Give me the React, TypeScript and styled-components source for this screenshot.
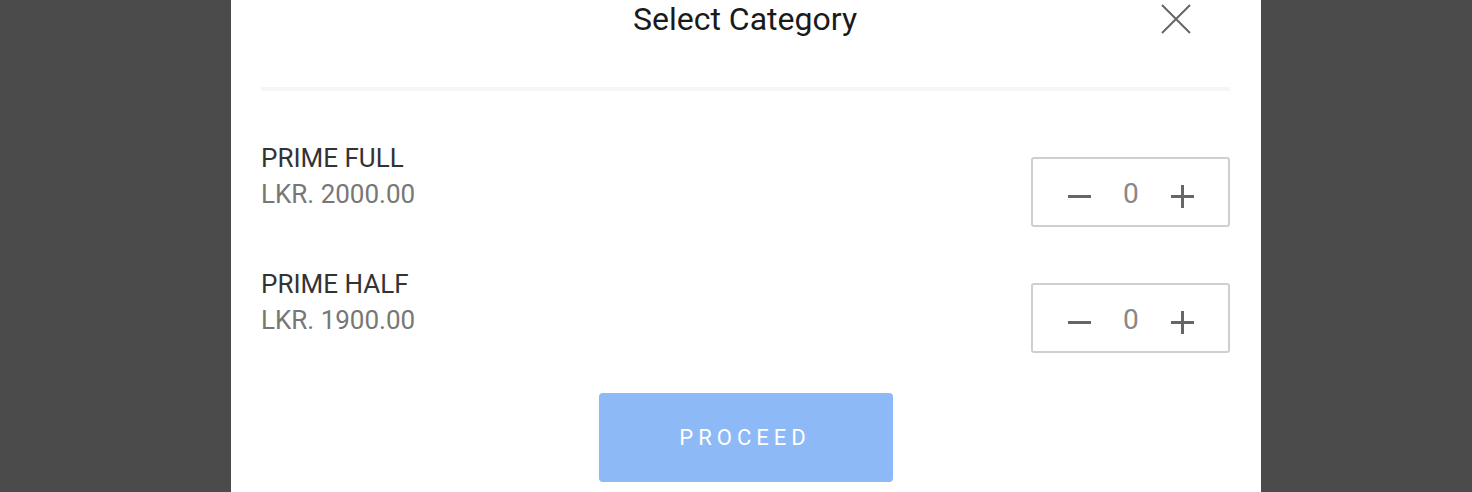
import React, { useState } from "react";
import styled, { createGlobalStyle } from "styled-components";

const GlobalStyle = createGlobalStyle`
  html, body {
    margin: 0;
    padding: 0;
    background: #4b4b4b;
    font-family: Roboto, "Liberation Sans", sans-serif;
  }
`;

type Category = { name: string; price: string };

const categories: Category[] = [
  { name: "PRIME FULL", price: "LKR. 2000.00" },
  { name: "PRIME HALF", price: "LKR. 1900.00" },
];

const App = () => {
  const [counts, setCounts] = useState<number[]>(categories.map(() => 0));

  const change = (i: number, d: number) =>
    setCounts((c) => c.map((v, j) => (j === i ? Math.max(0, v + d) : v)));

  return (
    <Page>
      <GlobalStyle />
      <Modal>
        <Header>
          <Title>Select Category</Title>
          <CloseButton aria-label="close">
            <svg width="30" height="30" viewBox="0 0 30 30">
              <path
                d="M1 1 L29 29 M29 1 L1 29"
                stroke="#666"
                strokeWidth="2"
                fill="none"
              />
            </svg>
          </CloseButton>
        </Header>
        <Divider />
        <List>
          {categories.map((c, i) => (
            <Row key={c.name}>
              <Info>
                <Name>{c.name}</Name>
                <Price>{c.price}</Price>
              </Info>
              <Stepper>
                <StepButton onClick={() => change(i, -1)}>
                  <svg width="23" height="23" viewBox="0 0 23 23">
                    <path d="M0 11.5 H23" stroke="#666" strokeWidth="3" />
                  </svg>
                </StepButton>
                <Count>{counts[i]}</Count>
                <StepButton onClick={() => change(i, 1)}>
                  <svg width="23" height="23" viewBox="0 0 23 23">
                    <path
                      d="M0 11.5 H23 M11.5 0 V23"
                      stroke="#666"
                      strokeWidth="3"
                    />
                  </svg>
                </StepButton>
              </Stepper>
            </Row>
          ))}
        </List>
        <Footer>
          <ProceedButton disabled={counts.every((v) => v === 0)}>
            PROCEED
          </ProceedButton>
        </Footer>
      </Modal>
    </Page>
  );
};

const Page = styled.div`
  width: 100%;
  height: 492px;
  display: flex;
  justify-content: flex-start;
  padding-left: 231px;
  box-sizing: border-box;
  overflow: hidden;
`;

const Modal = styled.div`
  width: 1030px;
  height: 492px;
  background: #fff;
  box-sizing: border-box;
  padding: 0 31px 0 30px;
  display: flex;
  flex-direction: column;
`;

const Header = styled.div`
  position: relative;
  height: 38px;
  display: flex;
  justify-content: center;
  align-items: center;
  margin-bottom: 49px;
`;

const Title = styled.h2`
  margin: 0;
  font-size: 32px;
  font-weight: 400;
  color: #1a1a1a;
  line-height: 38px;
  margin-left: -1px;
`;

const CloseButton = styled.button`
  position: absolute;
  right: 39px;
  top: 4px;
  background: none;
  border: none;
  padding: 0;
  cursor: pointer;
  display: flex;
`;

const Divider = styled.div`
  height: 4px;
  background: #f6f6f6;
`;

const List = styled.div`
  display: flex;
  flex-direction: column;
  gap: 56px;
  margin-top: 66px;
`;

const Row = styled.div`
  display: flex;
  justify-content: space-between;
  align-items: center;
  height: 70px;
`;

const Info = styled.div`
  display: flex;
  flex-direction: column;
  margin-top: -32px;
`;

const Name = styled.div`
  font-size: 26px;
  color: #333;
  line-height: 36px;
`;

const Price = styled.div`
  font-size: 26px;
  color: #777;
  line-height: 36px;
`;

const Stepper = styled.div`
  box-sizing: border-box;
  width: 199px;
  height: 70px;
  border: 2px solid #cfcfcf;
  border-radius: 3px;
  display: flex;
  align-items: center;
  gap: 32px;
  padding: 8px 0 0 35px;
`;

const StepButton = styled.button`
  background: none;
  border: none;
  padding: 0;
  cursor: pointer;
  display: flex;
`;

const Count = styled.span`
  font-size: 28px;
  line-height: 28px;
  color: #888;
  margin-top: -4px;
`;

const Footer = styled.div`
  display: flex;
  justify-content: center;
  margin-top: 40px;
`;

const ProceedButton = styled.button`
  width: 294px;
  height: 89px;
  border: none;
  border-radius: 4px;
  background: #8db9f7;
  color: #fff;
  font-family: Roboto, "Liberation Sans", sans-serif;
  font-size: 22px;
  letter-spacing: 5px;
  padding-left: 5px;
  cursor: pointer;
  &:disabled {
    cursor: default;
  }
`;

export default App;
